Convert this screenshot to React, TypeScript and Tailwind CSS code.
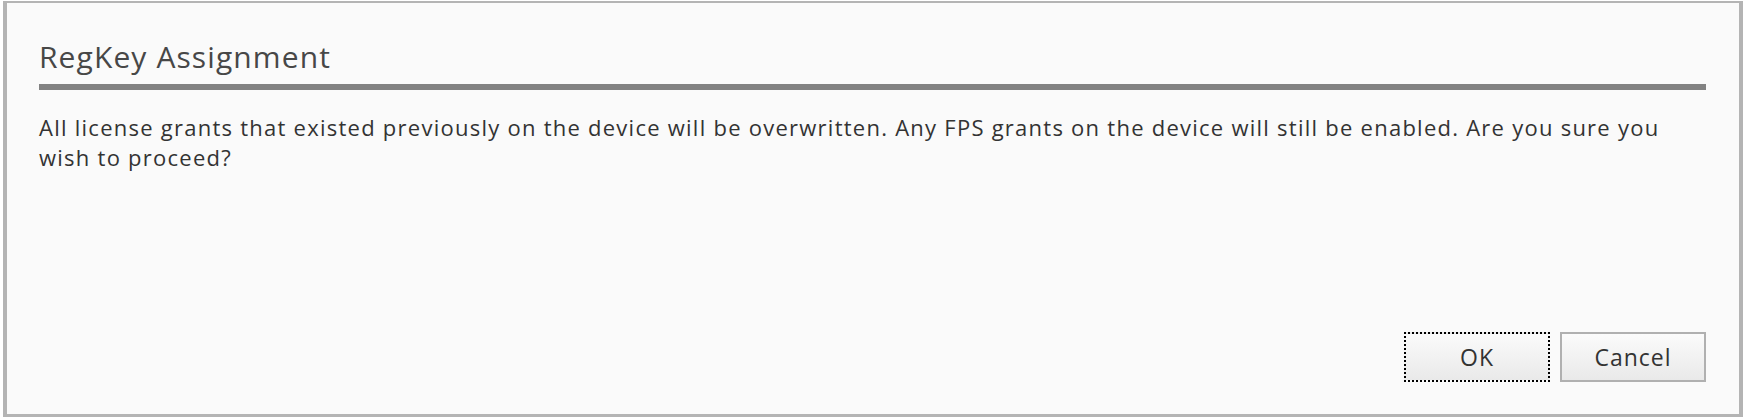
import React from "react";

export default function App() {
  return (
    <div
      className="w-[1743px] h-[418px] bg-white pl-[3px] pt-[1px] pb-[1px]"
      style={{ fontFamily: '"Open Sans", "Noto Sans", sans-serif' }}
    >
      <div className="h-full flex flex-col bg-[#fafafa] border-[#b4b4b4] border-t-2 border-l-4 border-r-4 border-b-[3px] pl-[32px] pr-[33px]">
        <div className="mt-[34px] text-[30px] leading-[40px] tracking-[1.1px] text-[#474747]">RegKey Assignment</div>
        <div className="mt-[7px] h-[6px] bg-[#828282]" />
        <p className="mt-[22px] text-[22px] leading-[30px] tracking-[1.25px] text-[#333333]">
          All license grants that existed previously on the device will be overwritten. Any FPS grants on the device will still be enabled. Are you sure you wish to proceed?
        </p>
        <div className="flex-1" />
        <div className="flex justify-end gap-[10px] pb-[32px]">
          <button className="w-[146px] h-[50px] border-2 border-dotted border-black bg-gradient-to-b from-[#fbfbfb] to-[#e9e9e9] text-[23px] tracking-[1px] text-[#333333] flex items-center justify-center">
            OK
          </button>
          <button className="w-[146px] h-[50px] border-2 border-[#b0b0b0] bg-gradient-to-b from-[#fbfbfb] to-[#e9e9e9] text-[23px] tracking-[1px] text-[#333333] flex items-center justify-center">
            Cancel
          </button>
        </div>
      </div>
    </div>
  );
}
